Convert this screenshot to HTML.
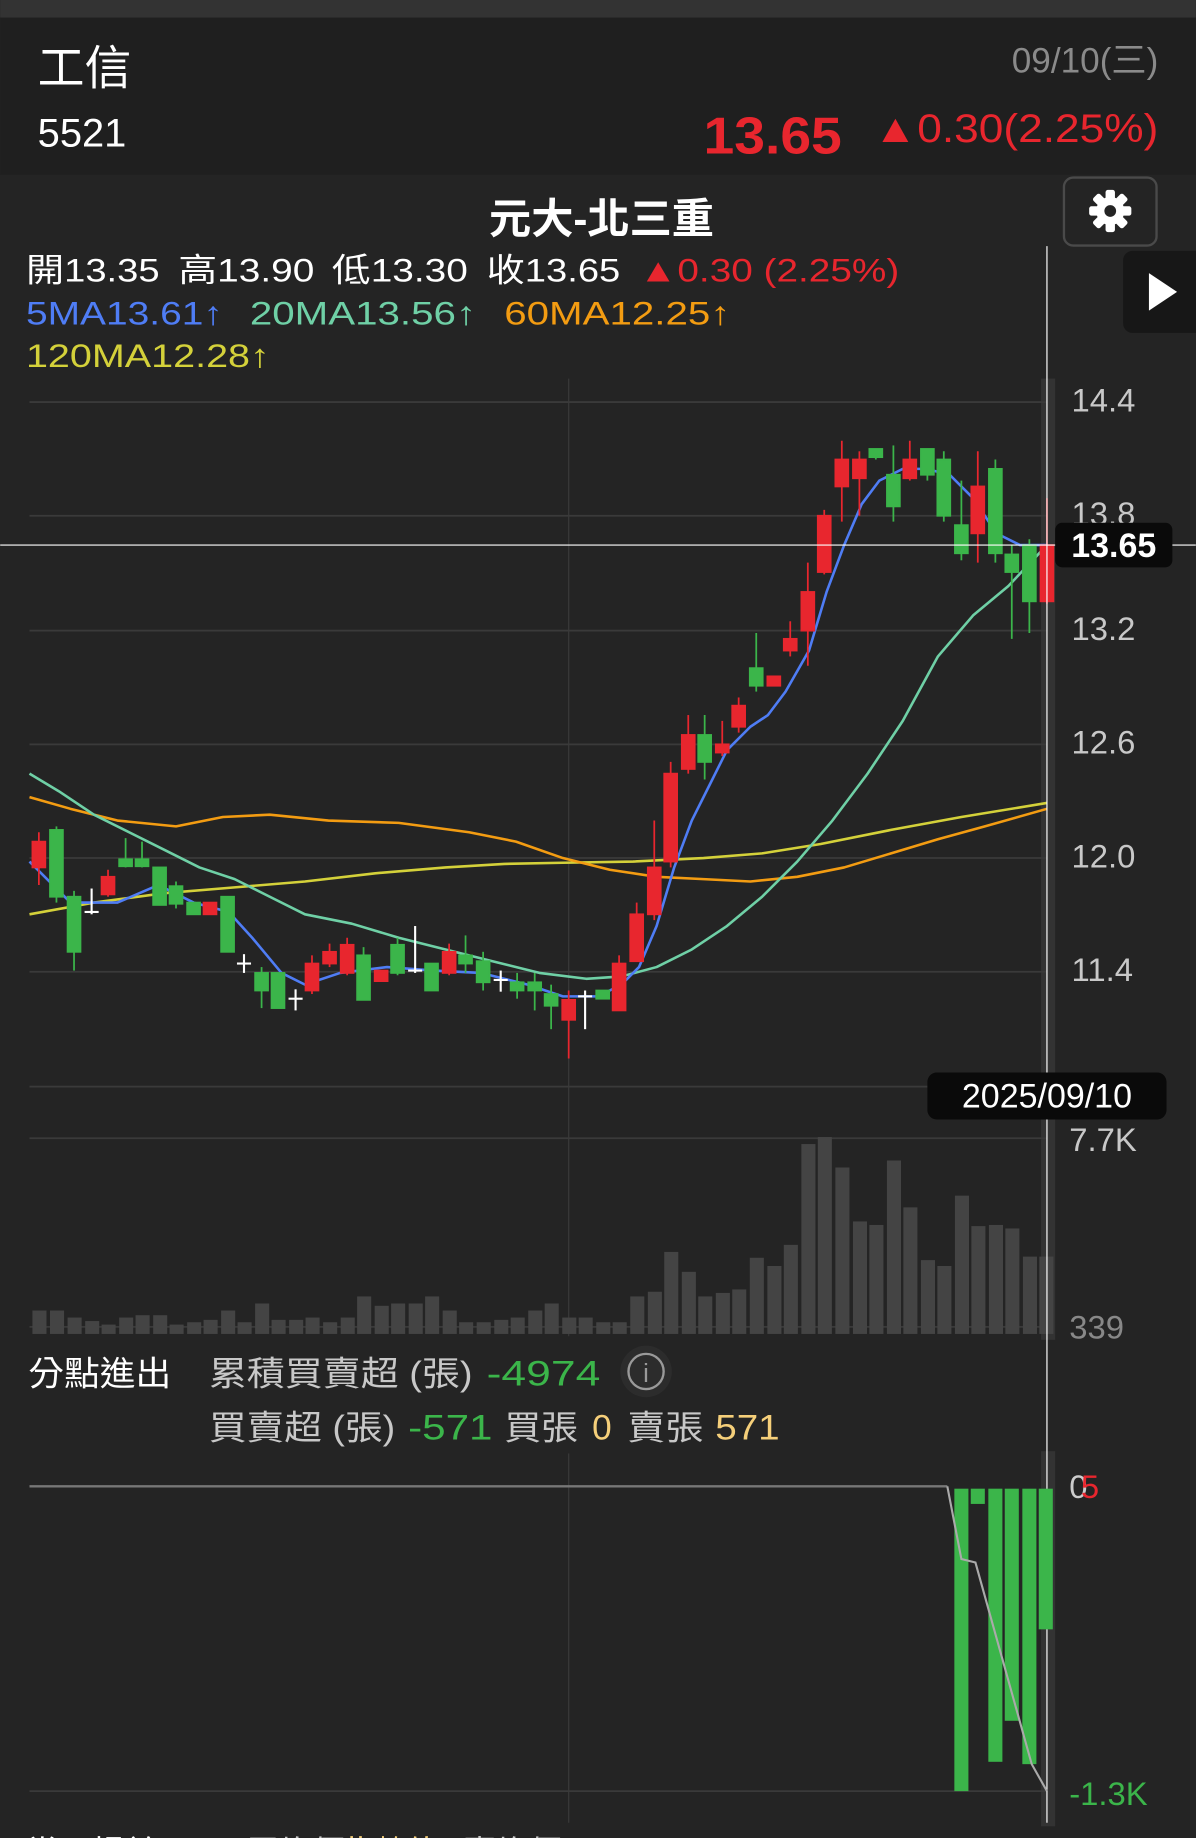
<!DOCTYPE html>
<html><head><meta charset="utf-8"><style>
html,body{margin:0;padding:0;background:#242424;}
svg{display:block}
text{font-family:"Liberation Sans","Noto Sans CJK TC",sans-serif;}
</style></head><body>
<svg width="1196" height="1838" viewBox="0 0 1020 1568" xmlns="http://www.w3.org/2000/svg">
<rect x="0" y="0" width="1020" height="1568" fill="#242424"/>
<rect x="0" y="0" width="1020" height="15" fill="#333"/>
<rect x="0" y="15" width="1020" height="134" fill="#1f1f1f"/>
<text x="32" y="72" font-size="40" fill="#fff">工信</text>
<text x="32" y="125" font-size="34" fill="#fff">5521</text>
<text x="988" y="62" font-size="30" fill="#8a8a8a" text-anchor="end">09/10(三)</text>
<text x="600" y="131" font-size="44" fill="#e8262e" font-weight="bold" textLength="118" lengthAdjust="spacingAndGlyphs">13.65</text>
<text x="745" y="121" font-size="34" fill="#e8262e" textLength="243" lengthAdjust="spacingAndGlyphs">▲0.30(2.25%)</text>
<rect x="907.5" y="151.5" width="79" height="58" rx="8" fill="#242424" stroke="#4a4a4a" stroke-width="2"/>
<g transform="translate(947,180)" fill="#fff">
<circle r="12"/>
<rect x="-4" y="-18" width="8" height="36" rx="2"/>
<rect x="-4" y="-18" width="8" height="36" rx="2" transform="rotate(45)"/>
<rect x="-4" y="-18" width="8" height="36" rx="2" transform="rotate(90)"/>
<rect x="-4" y="-18" width="8" height="36" rx="2" transform="rotate(135)"/>
<circle r="5" fill="#242424"/>
</g>
<text x="513" y="199" font-size="36" font-weight="bold" fill="#fff" text-anchor="middle">元大-北三重</text>
<text x="22" y="240" font-size="28" fill="#fff" textLength="114" lengthAdjust="spacingAndGlyphs">開13.35</text>
<text x="152" y="240" font-size="28" fill="#fff" textLength="116" lengthAdjust="spacingAndGlyphs">高13.90</text>
<text x="283" y="240" font-size="28" fill="#fff" textLength="116" lengthAdjust="spacingAndGlyphs">低13.30</text>
<text x="415" y="240" font-size="28" fill="#fff" textLength="114" lengthAdjust="spacingAndGlyphs">收13.65</text>
<text x="545" y="240" font-size="28" fill="#e8262e" textLength="222" lengthAdjust="spacingAndGlyphs">▲0.30 (2.25%)</text>
<text x="22" y="277" font-size="28" fill="#4f7df5" textLength="168" lengthAdjust="spacingAndGlyphs">5MA13.61↑</text>
<text x="213" y="277" font-size="28" fill="#6fd0a6" textLength="193" lengthAdjust="spacingAndGlyphs">20MA13.56↑</text>
<text x="430" y="277" font-size="28" fill="#f39c12" textLength="193" lengthAdjust="spacingAndGlyphs">60MA12.25↑</text>
<text x="22" y="313" font-size="28" fill="#d4d13a" textLength="208" lengthAdjust="spacingAndGlyphs">120MA12.28↑</text>
<rect x="958" y="214" width="70" height="70" rx="8" fill="#171717"/>
<path d="M980 233 L1004 249 L980 265 Z" fill="#fff"/>
<rect x="888" y="323" width="12" height="820" fill="#333"/>
<rect x="888" y="1238" width="12" height="320" fill="#333"/>
<g stroke="#3a3a3a" stroke-width="1.5">
<line x1="25" y1="343" x2="893" y2="343"/><line x1="25" y1="440" x2="893" y2="440"/><line x1="25" y1="538" x2="893" y2="538"/><line x1="25" y1="635" x2="893" y2="635"/><line x1="25" y1="732" x2="893" y2="732"/><line x1="25" y1="829" x2="893" y2="829"/><line x1="25" y1="927" x2="893" y2="927"/>
<line x1="25" y1="971" x2="893" y2="971"/><line x1="25" y1="1132" x2="893" y2="1132"/>
<line x1="25" y1="1528" x2="893" y2="1528"/>
<line x1="485" y1="323" x2="485" y2="1140" stroke-width="1"/>
<line x1="485" y1="1240" x2="485" y2="1555" stroke-width="1"/>
</g>
<g font-size="28" fill="#c8c8c8">
<text x="914" y="351">14.4</text><text x="914" y="448">13.8</text><text x="914" y="546">13.2</text><text x="914" y="643">12.6</text><text x="914" y="740">12.0</text><text x="914" y="837">11.4</text><text x="914" y="935">10.8</text>
<text x="912" y="982">7.7K</text>
<text x="912" y="1142" fill="#888">339</text>
</g>
<g fill="none" stroke-width="2.2" stroke-linejoin="round">
<polyline stroke="#d4d13a" points="25,780 80,770 140,762 200,757 260,752 320,745 380,740 430,737 480,736 540,735 600,732 650,728 700,720 760,708 820,697 893,685"/>
<polyline stroke="#f39c12" points="25,680 60,690 100,700 150,705 190,697 230,695 280,700 340,702 400,710 440,718 480,732 520,742 560,748 600,750 640,752 680,748 720,740 760,728 800,716 840,705 893,690"/>
<polyline stroke="#6fd0a6" points="25,660 50,675 80,695 110,710 140,725 170,740 200,750 230,765 260,780 300,788 340,800 380,810 420,820 460,830 500,835 530,833 560,825 590,810 620,790 650,765 680,735 710,700 740,660 770,615 800,560 830,525 860,500 893,465"/>
<polyline stroke="#4f7df5" points="25,735 60,770 100,770 135,755 165,770 195,778 215,800 240,830 260,840 290,830 330,825 370,828 410,830 450,840 480,850 510,850 530,840 545,825 560,790 575,740 590,700 605,670 620,640 640,620 655,610 670,590 690,555 705,505 720,465 735,430 750,410 770,400 790,400 810,405 830,425 850,455 870,465 893,465"/>
</g>
<g stroke-width="1.5">
<g fill="#e8262e" stroke="#e8262e">
<line x1="33" y1="710" x2="33" y2="755"/><rect x="27.5" y="718" width="11" height="22"/>
<line x1="92" y1="742" x2="92" y2="765"/><rect x="86.5" y="748" width="11" height="15"/>
<rect x="173.5" y="770" width="11" height="10"/>
<line x1="266" y1="815" x2="266" y2="848"/><rect x="260.5" y="822" width="11" height="23"/>
<line x1="281" y1="805" x2="281" y2="825"/><rect x="275.5" y="812" width="11" height="10"/>
<line x1="296" y1="800" x2="296" y2="832"/><rect x="290.5" y="806" width="11" height="24"/>
<rect x="319.5" y="828" width="11" height="9"/>
<line x1="383" y1="805" x2="383" y2="832"/><rect x="377.5" y="812" width="11" height="18"/>
<line x1="485" y1="845" x2="485" y2="903"/><rect x="479.5" y="853" width="11" height="17"/>
<line x1="528" y1="815" x2="528" y2="862"/><rect x="522.5" y="822" width="11" height="40"/>
<line x1="543" y1="770" x2="543" y2="820"/><rect x="537.5" y="780" width="11" height="40"/>
<line x1="558" y1="700" x2="558" y2="785"/><rect x="552.5" y="740" width="11" height="40"/>
<line x1="572" y1="650" x2="572" y2="740"/><rect x="566.5" y="660" width="11" height="75"/>
<line x1="587" y1="610" x2="587" y2="660"/><rect x="581.5" y="627" width="11" height="29"/>
<line x1="616" y1="615" x2="616" y2="645"/><rect x="610.5" y="635" width="11" height="7"/>
<line x1="630" y1="595" x2="630" y2="625"/><rect x="624.5" y="602" width="11" height="18"/>
<rect x="654.5" y="577" width="11" height="8"/>
<line x1="674" y1="530" x2="674" y2="560"/><rect x="668.5" y="545" width="11" height="10"/>
<line x1="689" y1="480" x2="689" y2="568"/><rect x="683.5" y="505" width="11" height="33"/>
<line x1="703" y1="435" x2="703" y2="490"/><rect x="697.5" y="440" width="11" height="48"/>
<line x1="718" y1="376" x2="718" y2="445"/><rect x="712.5" y="392" width="11" height="23"/>
<line x1="733" y1="385" x2="733" y2="440"/><rect x="727.5" y="392" width="11" height="16"/>
<line x1="776" y1="376" x2="776" y2="410"/><rect x="770.5" y="392" width="11" height="16"/>
<line x1="834" y1="385" x2="834" y2="480"/><rect x="828.5" y="415" width="11" height="40"/>
<line x1="893" y1="425" x2="893" y2="515"/><rect x="887.5" y="465" width="11" height="48"/>
</g>
<g fill="#3bb54a" stroke="#3bb54a">
<line x1="48" y1="705" x2="48" y2="770"/><rect x="42.5" y="708" width="11" height="57"/>
<line x1="63" y1="760" x2="63" y2="828"/><rect x="57.5" y="765" width="11" height="47"/>
<line x1="107" y1="715" x2="107" y2="740"/><rect x="101.5" y="733" width="11" height="6"/>
<line x1="121" y1="718" x2="121" y2="740"/><rect x="115.5" y="733" width="11" height="6"/>
<rect x="130.5" y="740" width="11" height="32"/>
<line x1="150" y1="752" x2="150" y2="775"/><rect x="144.5" y="756" width="11" height="15"/>
<rect x="159.5" y="770" width="11" height="10"/>
<rect x="188.5" y="765" width="11" height="47"/>
<line x1="223" y1="825" x2="223" y2="860"/><rect x="217.5" y="830" width="11" height="15"/>
<rect x="231.5" y="830" width="11" height="30"/>
<line x1="310" y1="808" x2="310" y2="853"/><rect x="304.5" y="815" width="11" height="38"/>
<line x1="339" y1="800" x2="339" y2="832"/><rect x="333.5" y="806" width="11" height="24"/>
<rect x="362.5" y="822" width="11" height="23"/>
<line x1="397" y1="798" x2="397" y2="830"/><rect x="391.5" y="815" width="11" height="7"/>
<line x1="412" y1="812" x2="412" y2="845"/><rect x="406.5" y="820" width="11" height="18"/>
<line x1="441" y1="830" x2="441" y2="852"/><rect x="435.5" y="838" width="11" height="7"/>
<line x1="456" y1="830" x2="456" y2="862"/><rect x="450.5" y="838" width="11" height="7"/>
<line x1="470" y1="840" x2="470" y2="878"/><rect x="464.5" y="848" width="11" height="10"/>
<rect x="508.5" y="845" width="11" height="7"/>
<line x1="601" y1="610" x2="601" y2="665"/><rect x="595.5" y="627" width="11" height="23"/>
<line x1="645" y1="540" x2="645" y2="590"/><rect x="639.5" y="570" width="11" height="15"/>
<line x1="747" y1="383" x2="747" y2="392"/><rect x="741.5" y="383" width="11" height="7"/>
<line x1="762" y1="380" x2="762" y2="445"/><rect x="756.5" y="405" width="11" height="27"/>
<line x1="791" y1="383" x2="791" y2="410"/><rect x="785.5" y="383" width="11" height="22"/>
<line x1="805" y1="385" x2="805" y2="445"/><rect x="799.5" y="392" width="11" height="48"/>
<line x1="820" y1="410" x2="820" y2="478"/><rect x="814.5" y="448" width="11" height="24"/>
<line x1="849" y1="392" x2="849" y2="480"/><rect x="843.5" y="400" width="11" height="72"/>
<line x1="863" y1="465" x2="863" y2="545"/><rect x="857.5" y="473" width="11" height="15"/>
<line x1="878" y1="460" x2="878" y2="540"/><rect x="872.5" y="465" width="11" height="48"/>
</g>
<g stroke="#fff" stroke-width="1.8">
<line x1="78" y1="758" x2="78" y2="780"/><line x1="72" y1="778" x2="84" y2="778"/>
<line x1="208" y1="814" x2="208" y2="830"/><line x1="202" y1="822" x2="214" y2="822"/>
<line x1="252" y1="844" x2="252" y2="862"/><line x1="246" y1="852" x2="258" y2="852"/>
<line x1="354" y1="790" x2="354" y2="830"/><line x1="348" y1="828" x2="360" y2="828"/>
<line x1="427" y1="828" x2="427" y2="846"/><line x1="421" y1="836" x2="433" y2="836"/>
<line x1="499" y1="845" x2="499" y2="878"/><line x1="493" y1="850" x2="505" y2="850"/>
</g>
</g>
<g fill="#444">
<rect x="27.5" y="1118" width="12" height="20"/><rect x="42.5" y="1118" width="12" height="20"/><rect x="57.5" y="1124" width="12" height="14"/><rect x="72.5" y="1127" width="12" height="11"/><rect x="86.5" y="1130" width="12" height="8"/><rect x="101.5" y="1124" width="12" height="14"/><rect x="115.5" y="1122" width="12" height="16"/><rect x="130.5" y="1122" width="12" height="16"/><rect x="144.5" y="1130" width="12" height="8"/><rect x="159.5" y="1128" width="12" height="10"/><rect x="173.5" y="1126" width="12" height="12"/><rect x="188.5" y="1118" width="12" height="20"/><rect x="202.5" y="1128" width="12" height="10"/><rect x="217.5" y="1112" width="12" height="26"/><rect x="231.5" y="1126" width="12" height="12"/><rect x="246.5" y="1126" width="12" height="12"/><rect x="260.5" y="1124" width="12" height="14"/><rect x="275.5" y="1128" width="12" height="10"/><rect x="290.5" y="1124" width="12" height="14"/><rect x="304.5" y="1106" width="12" height="32"/><rect x="319.5" y="1114" width="12" height="24"/><rect x="333.5" y="1112" width="12" height="26"/><rect x="348.5" y="1112" width="12" height="26"/><rect x="362.5" y="1106" width="12" height="32"/><rect x="377.5" y="1118" width="12" height="20"/><rect x="391.5" y="1128" width="12" height="10"/><rect x="406.5" y="1128" width="12" height="10"/><rect x="421.5" y="1126" width="12" height="12"/><rect x="435.5" y="1124" width="12" height="14"/><rect x="450.5" y="1118" width="12" height="20"/><rect x="464.5" y="1112" width="12" height="26"/><rect x="479.5" y="1124" width="12" height="14"/><rect x="493.5" y="1124" width="12" height="14"/><rect x="508.5" y="1128" width="12" height="10"/><rect x="522.5" y="1128" width="12" height="10"/><rect x="537.5" y="1106" width="12" height="32"/><rect x="552.5" y="1102" width="12" height="36"/><rect x="566.5" y="1068" width="12" height="70"/><rect x="581.5" y="1085" width="12" height="53"/><rect x="595.5" y="1106" width="12" height="32"/><rect x="610.5" y="1103" width="12" height="35"/><rect x="624.5" y="1100" width="12" height="38"/><rect x="639.5" y="1073" width="12" height="65"/><rect x="654.5" y="1080" width="12" height="58"/><rect x="668.5" y="1062" width="12" height="76"/><rect x="683.5" y="976" width="12" height="162"/><rect x="697.5" y="970" width="12" height="168"/><rect x="712.5" y="996" width="12" height="142"/><rect x="727.5" y="1042" width="12" height="96"/><rect x="741.5" y="1045" width="12" height="93"/><rect x="756.5" y="990" width="12" height="148"/><rect x="770.5" y="1030" width="12" height="108"/><rect x="785.5" y="1075" width="12" height="63"/><rect x="799.5" y="1080" width="12" height="58"/><rect x="814.5" y="1020" width="12" height="118"/><rect x="828.5" y="1046" width="12" height="92"/><rect x="843.5" y="1045" width="12" height="93"/><rect x="857.5" y="1048" width="12" height="90"/><rect x="872.5" y="1072" width="12" height="66"/><rect x="886.5" y="1072" width="12" height="66"/>
</g>
<line x1="893" y1="210" x2="893" y2="1555" stroke="#fff" stroke-width="1"/>
<line x1="0" y1="465" x2="1020" y2="465" stroke="#fff" stroke-width="1"/>
<rect x="900" y="446" width="100" height="38" rx="6" fill="#0a0a0a"/>
<text x="950" y="475" font-size="29" fill="#fff" text-anchor="middle" font-weight="bold">13.65</text>
<rect x="791" y="915" width="204" height="40" rx="8" fill="#0a0a0a"/>
<text x="893" y="945" font-size="29" fill="#fff" text-anchor="middle">2025/09/10</text>
<text x="24" y="1182" font-size="29" fill="#fff" textLength="122" lengthAdjust="spacingAndGlyphs">分點進出</text>
<text x="178" y="1182" font-size="29" fill="#c8c8c8" textLength="225" lengthAdjust="spacingAndGlyphs">累積買賣超 (張)</text>
<text x="415" y="1182" font-size="30" fill="#3bb54a" textLength="97" lengthAdjust="spacingAndGlyphs">-4974</text>
<circle cx="551" cy="1170" r="22" fill="#2c2c2c"/>
<circle cx="551" cy="1170" r="15" fill="none" stroke="#999" stroke-width="2"/>
<text x="551" y="1179" font-size="22" fill="#999" text-anchor="middle" font-family="Liberation Serif,serif">i</text>
<text x="178" y="1228" font-size="29" fill="#c8c8c8" textLength="159" lengthAdjust="spacingAndGlyphs">買賣超 (張)</text>
<text x="348" y="1228" font-size="30" fill="#3bb54a" textLength="72" lengthAdjust="spacingAndGlyphs">-571</text>
<text x="430" y="1228" font-size="29" fill="#c8c8c8" textLength="63" lengthAdjust="spacingAndGlyphs">買張</text>
<text x="505" y="1228" font-size="30" fill="#f5cf7a">0</text>
<text x="535" y="1228" font-size="29" fill="#c8c8c8" textLength="65" lengthAdjust="spacingAndGlyphs">賣張</text>
<text x="610" y="1228" font-size="30" fill="#f5cf7a" textLength="55" lengthAdjust="spacingAndGlyphs">571</text>
<line x1="25" y1="1268" x2="808" y2="1268" stroke="#777" stroke-width="2"/>
<g fill="#3bb54a">
<rect x="814" y="1270" width="12" height="258"/><rect x="828" y="1270" width="12" height="13"/><rect x="843" y="1270" width="12" height="233"/><rect x="857" y="1270" width="12" height="198"/><rect x="872" y="1270" width="12" height="235"/><rect x="886" y="1270" width="12" height="120"/>
</g>
<polyline fill="none" stroke="#aaa" stroke-width="1.8" points="808,1268 820,1330 832,1333 880,1505 893,1528"/>
<text x="912" y="1278" font-size="28" fill="#ccc">0</text>
<text x="922" y="1278" font-size="28" fill="#e8262e">5</text>
<text x="912" y="1540" font-size="28" fill="#3bb54a">-1.3K</text>
<text x="22" y="1590" font-size="28" fill="#fff">當日損益</text>
<text x="210" y="1590" font-size="28" fill="#c8c8c8">買均價</text>
<text x="290" y="1590" font-size="28" fill="#f5cf7a">此數值</text>
<text x="395" y="1590" font-size="28" fill="#c8c8c8">賣均價 13.50</text>
</svg>
</body></html>
